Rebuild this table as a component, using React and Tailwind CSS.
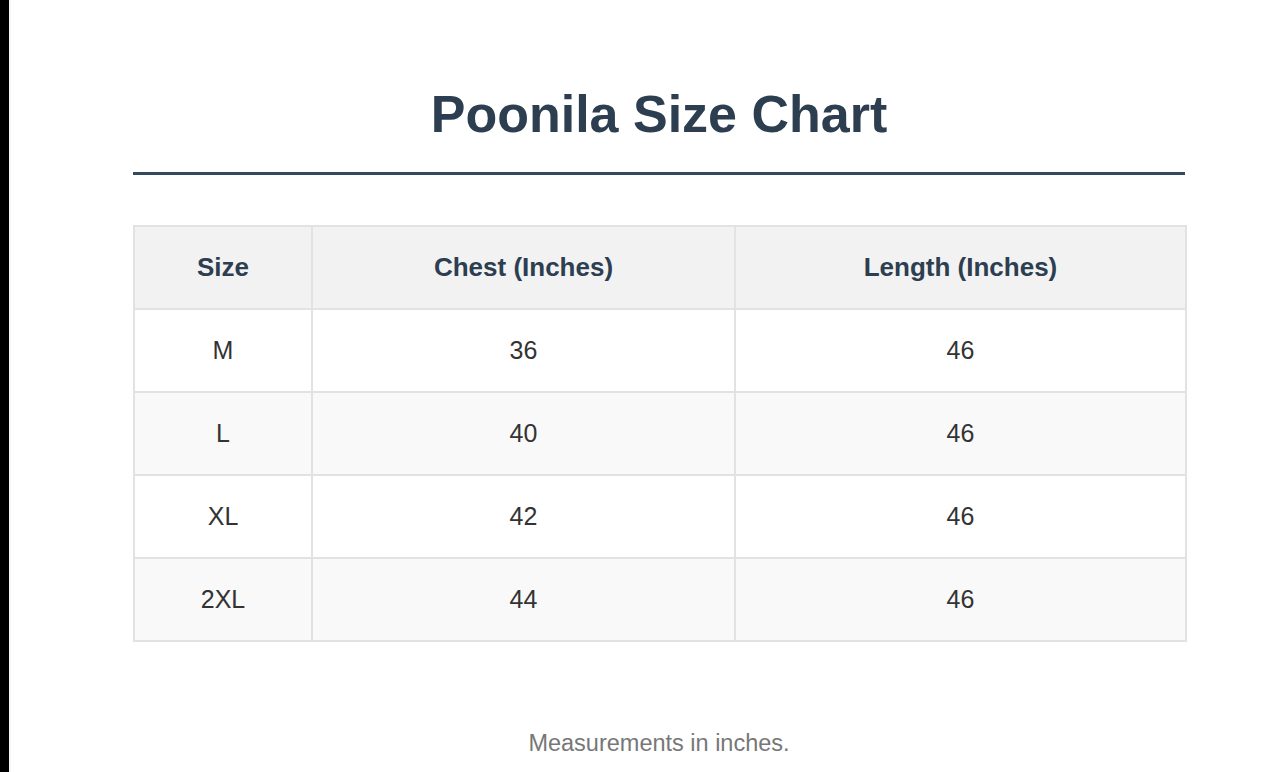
export default function App() {
  const rows = [
    ["M", "36", "46"],
    ["L", "40", "46"],
    ["XL", "42", "46"],
    ["2XL", "44", "46"],
  ];
  return (
    <div className="flex w-[1277px] h-[772px] overflow-hidden bg-white" style={{ fontFamily: '"Liberation Sans", Arial, sans-serif' }}>
      <div className="w-[9px] shrink-0 bg-black" />
      <div className="w-[2px] shrink-0 bg-[#f6f6f6]" />
      <div className="flex-1 pl-[122px]">
        <div className="w-[1052px] flex flex-col">
          <h1 className="mt-[84px] text-center text-[52px] leading-[60px] font-bold text-[#2c3e50]">Poonila Size Chart</h1>
          <div className="mt-[28px] h-[3px] bg-[#34495e]" />
          <table className="mt-[50px] w-[1052px] border-collapse table-fixed">
            <thead>
              <tr className="h-[83px] bg-[#f2f2f2]">
                <th className="w-[178px] border-2 border-[#e2e2e2] text-[26px] font-bold text-[#2c3e50]">Size</th>
                <th className="w-[423px] border-2 border-[#e2e2e2] text-[26px] font-bold text-[#2c3e50]">Chest (Inches)</th>
                <th className="w-[451px] border-2 border-[#e2e2e2] text-[26px] font-bold text-[#2c3e50]">Length (Inches)</th>
              </tr>
            </thead>
            <tbody>
              {rows.map((r, i) => (
                <tr key={i} className={i % 2 === 1 ? "h-[83px] bg-[#f9f9f9]" : "h-[83px] bg-white"}>
                  {r.map((c, j) => (
                    <td key={j} className="border-2 border-[#e2e2e2] text-center text-[25px] text-[#333333]">{c}</td>
                  ))}
                </tr>
              ))}
            </tbody>
          </table>
          <p className="mt-[88px] text-center text-[23.5px] leading-[27px] text-[#777777]">Measurements in inches.</p>
        </div>
      </div>
    </div>
  );
}
